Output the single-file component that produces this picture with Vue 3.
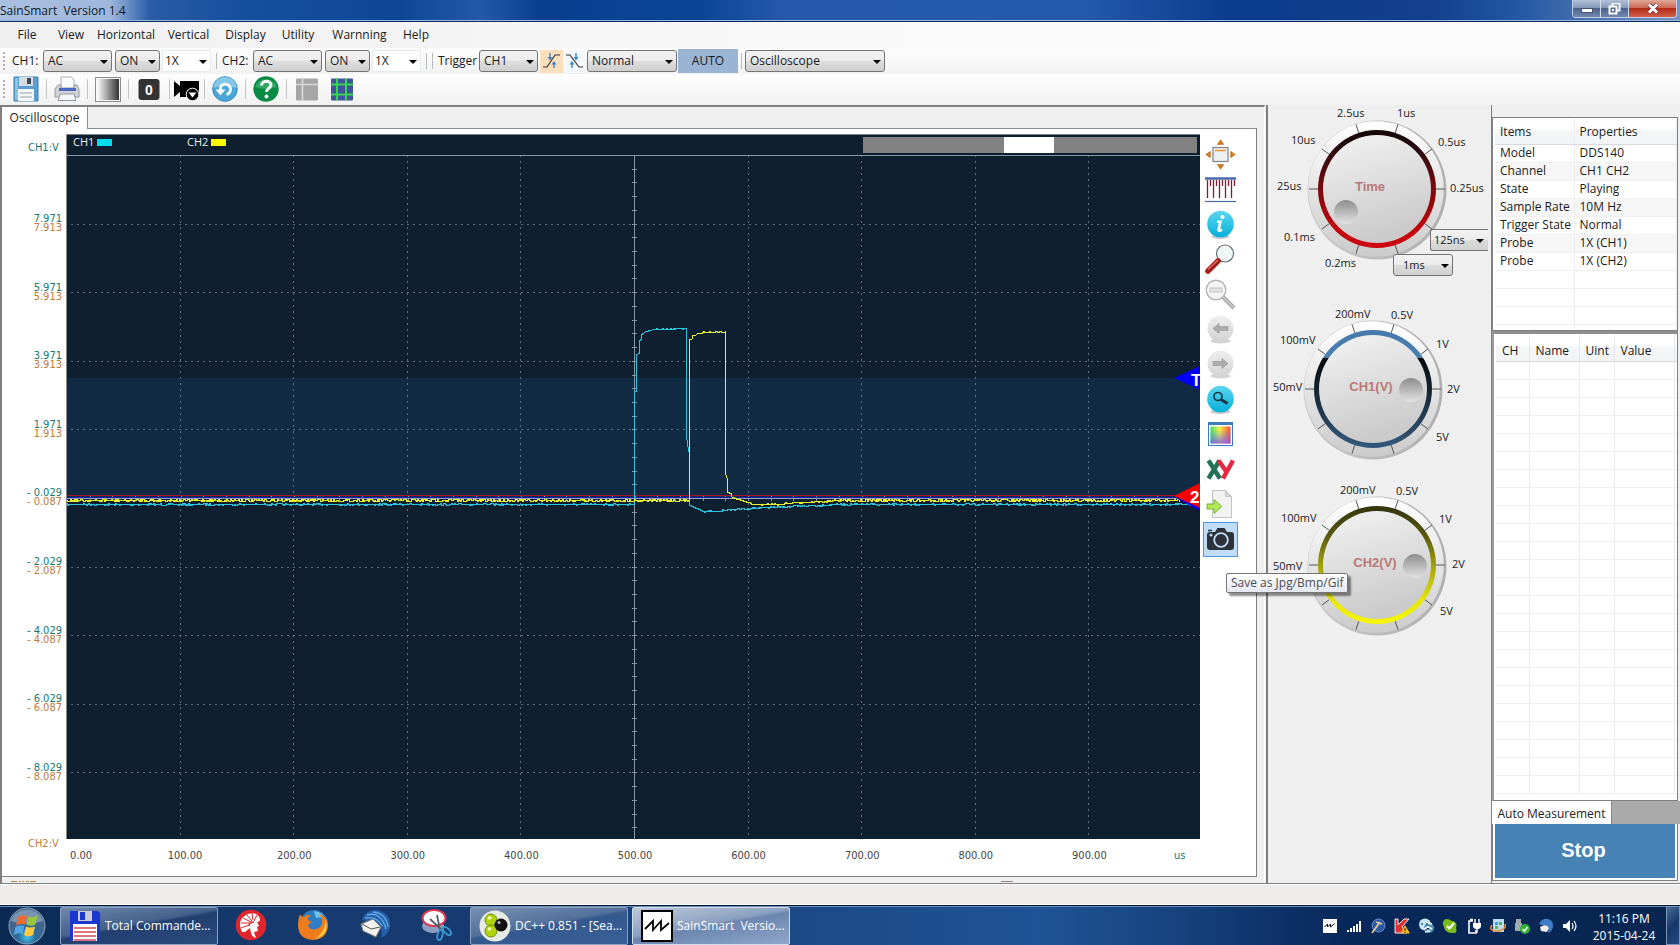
<script setup>
import { ref } from 'vue'

const menus = [
  { name: 'File', w: 40 }, { name: 'View', w: 48 }, { name: 'Horizontal', w: 62 },
  { name: 'Vertical', w: 63 }, { name: 'Display', w: 51 }, { name: 'Utility', w: 54 },
  { name: 'Warnning', w: 69 }, { name: 'Help', w: 44 }
]

const controls = [
  { id: 'ch1', label: 'CH1:', coupling: 'AC', state: 'ON', probe: '1X' },
  { id: 'ch2', label: 'CH2:', coupling: 'AC', state: 'ON', probe: '1X' }
]

const fileTools = [
  { id: 'save', sep: true }, { id: 'print', sep: true }, { id: 'contrast', sep: true },
  { id: 'zero', sep: true }, { id: 'video', sep: true }, { id: 'refresh', sep: true },
  { id: 'help', sep: true }, { id: 'table', sep: false }, { id: 'grid', sep: false }
]

const sideTools = ['move', 'ruler', 'info', 'zoomin', 'zoomout', 'back', 'forward', 'find', 'palette', 'xy', 'export', 'snapshot']

const axis = [
  ['7.971', '7.913'], ['5.971', '5.913'], ['3.971', '3.913'], ['1.971', '1.913'],
  ['- 0.029', '- 0.087'], ['- 2.029', '- 2.087'], ['- 4.029', '- 4.087'],
  ['- 6.029', '- 6.087'], ['- 8.029', '- 8.087']
]
const axisTop = i => ({ top: ((80 + i * 68.6) / 705) * 100 + '%' })

const times = ['0.00', '100.00', '200.00', '300.00', '400.00', '500.00', '600.00', '700.00', '800.00', '900.00']
const timeLeft = i => ({ left: (i === 0 ? 14 : i === 1 ? 118 : i * 113.6) / 11.33 + '%' })

const gridX = [1, 2, 3, 4, 6, 7, 8, 9].map(n => Math.round(n * 113.6) + 0.5 - 1)
const gridY = [1, 2, 3, 4, 6, 7, 8, 9].map(n => Math.round(n * 68.6) + 0.5)
const ticksY = Array.from({ length: 49 }, (_, i) => Math.round((i + 1) * 13.72) + 0.5)
const ticksX = Array.from({ length: 49 }, (_, i) => Math.round((i + 1) * 22.7) + 0.5)

let seed = 7
function rand() {
  seed = (seed * 16807) % 2147483647
  return seed / 2147483647
}
function flat(from, to, yFrom, yTo, amp) {
  const out = []
  for (let x = from; x <= to; x += 1) {
    const t = (x - from) / (to - from)
    const y = yFrom + (yTo - yFrom) * t
    out.push([x, Math.round(y + (rand() - 0.5) * 2 * amp) + 0.5])
  }
  return out
}
function path(points) {
  return 'M' + points.map(p => p.join(' ')).join('L')
}
const cyan = path([
  ...flat(0, 566, 349, 349, 0.7),
  [567.5, 349], [567.5, 236], [569.5, 236], [569.5, 200], [572.5, 198], [572.5, 186], [574.5, 184],
  [574.5, 180], [578, 177], [585, 175],
  ...flat(588, 619, 174, 173, 0.6),
  [619.5, 173.5], [619.5, 281], [621.5, 296], [622.5, 296], [622.5, 349],
  ...flat(623, 635, 350, 355, 0.5), ...flat(636, 655, 356, 356, 0.6),
  ...flat(656, 700, 355, 352, 0.7), ...flat(701, 765, 352, 349.5, 0.7), ...flat(766, 1124, 349, 349, 0.7)
])
const yellow = path([
  ...flat(0, 621, 345, 345, 1.3),
  [622.5, 345], [622.5, 185], [625, 184], [625, 181], [629, 180], [631, 178],
  ...flat(634, 658, 177, 176.5, 0.6),
  [658.5, 177], [658.5, 318], [660.5, 325], [660.5, 337], [664.5, 339], [665, 342],
  ...flat(666, 684, 342, 348, 0.5), ...flat(685, 715, 349, 349, 0.6),
  ...flat(716, 760, 348, 346, 0.8), ...flat(761, 1113, 345, 345, 1.3)
])

const knobs = [
  {
    id: 'time', title: 'Time', cx: 109, h: 200, tx: 102, dot: [-31, 23],
    stops: [['0', '#14060a'], ['0.15', '#240a0e'], ['0.5', '#7c0a10'], ['0.85', '#c4040c'], ['1', '#cc0610']],
    labels: [['2.5us', 69, 12], ['1us', 129, 12], ['10us', 23, 39], ['0.5us', 170, 41], ['25us', 9, 85], ['0.25us', 182, 87], ['0.1ms', 16, 136], ['0.2ms', 57, 162]]
  },
  {
    id: 'volt1', title: 'CH1(V)', cx: 105, h: 176, tx: 103, dot: [38, 1],
    stops: [['0', '#4479aa'], ['0.24', '#4a80b0'], ['0.24', '#060a0e'], ['0.5', '#16232f'], ['1', '#34597c']],
    labels: [['200mV', 67, 13], ['0.5V', 123, 14], ['100mV', 12, 39], ['1V', 168, 43], ['50mV', 5, 86], ['2V', 179, 88], ['5V', 168, 136]]
  },
  {
    id: 'volt2', title: 'CH2(V)', cx: 109, h: 176, tx: 107, dot: [38, 1],
    stops: [['0', '#33330e'], ['0.25', '#58580c'], ['0.5', '#a0a00e'], ['0.8', '#e6e608'], ['1', '#f8f800']],
    labels: [['200mV', 72, 13], ['0.5V', 128, 14], ['100mV', 13, 41], ['1V', 171, 42], ['50mV', 5, 89], ['2V', 184, 87], ['5V', 172, 134]]
  }
]
const spokes = Array.from({ length: 10 }, (_, i) => {
  const a = (i * 36 * Math.PI) / 180
  return [Math.cos(a) * 59, Math.sin(a) * 59, Math.cos(a) * 68, Math.sin(a) * 68]
})

const props = [
  ['Model', 'DDS140'], ['Channel', 'CH1 CH2'], ['State', 'Playing'], ['Sample Rate', '10M Hz'],
  ['Trigger State', 'Normal'], ['Probe', '1X (CH1)'], ['Probe', '1X (CH2)'], ['', ''], ['', ''], ['', ''], ['', '']
]

const pinned = ['helmet', 'firefox', 'mail', 'scissors']
const tray = ['wave', 'signal', 'tool', 'antivirus', 'globe', 'ok', 'power', 'sync', 'usb', 'bird', 'sound']
const rising = ref(true)
</script>

<template>
  <div class="window">
    <header class="titlebar">
      <h1>SainSmart&nbsp; Version 1.4</h1>
      <div class="winbtns">
        <button class="wb min" aria-label="Minimize"><svg width="12" height="10" viewBox="0 0 12 10"><rect x="0.5" y="4.500" width="11" height="4" fill="#fff" stroke="#46536b" /></svg></button>
        <button class="wb max" aria-label="Restore">
          <svg width="13" height="12" viewBox="0 0 13 12"><path d="M4.500 .5h7v7h-7z" fill="#566b93" stroke="#fff" stroke-width="2" /><path d="M1.500 3.500h7v7h-7z" fill="#566b93" stroke="#fff" stroke-width="2" /><path d="M4 6h2v2h-2z" fill="#fff" /></svg>
        </button>
        <button class="wb close" aria-label="Close"><svg width="12" height="11" viewBox="0 0 12 11"><path d="M2 1.500l8 8M10 1.500l-8 8" stroke="#5d2a28" stroke-width="4.400" /><path d="M2 1.500l8 8M10 1.500l-8 8" stroke="#fff" stroke-width="3" /></svg></button>
      </div>
    </header>

    <nav class="menubar">
      <button v-for="m in menus" :key="m.name" :style="{ width: m.w + 'px' }">{{ m.name }}</button>
    </nav>

    <div class="toolbar first">
      <i class="grip"></i>
      <template v-for="c in controls" :key="c.id">
        <label class="lbl" :for="c.id">{{ c.label }}</label>
        <span class="combo w69"><select :id="c.id"><option>{{ c.coupling }}</option><option>DC</option></select></span>
        <span class="combo w45"><select :aria-label="c.id + ' state'"><option>{{ c.state }}</option><option>OFF</option></select></span>
        <span class="combo w49 plain"><select :aria-label="c.id + ' probe'"><option>{{ c.probe }}</option><option>10X</option></select></span>
        <i class="vsep"></i>
      </template>
      <i class="vsep"></i>
      <label class="lbl trig" for="trigger">Trigger</label>
      <span class="combo w59"><select id="trigger"><option>CH1</option><option>CH2</option></select></span>
      <button class="edge" :class="{ on: rising }" aria-label="Rising edge" @click="rising = true">
        <svg width="17" height="16" viewBox="0 0 17 16"><path d="M0 14h4L12 2h5" fill="none" stroke="#3a3535" stroke-width="1.200" /><path d="M7 0v5M11 15v-5" stroke="#3f86c8" stroke-width="1.400" /><path d="M4.500 4h5L7 7.500zM8.500 11.500h5L11 8z" fill="#3f86c8" /></svg>
      </button>
      <button class="edge narrow" :class="{ on: !rising }" aria-label="Falling edge" @click="rising = false">
        <svg width="17" height="16" viewBox="0 0 17 16"><path d="M0 2h4L13 14h4" fill="none" stroke="#3a3535" stroke-width="1.200" /><path d="M10 0v5M6 15v-5" stroke="#3f86c8" stroke-width="1.400" /><path d="M7.500 4h5L10 7.500zM3.500 11.500h5L6 8z" fill="#3f86c8" /></svg>
      </button>
      <span class="combo w90"><select aria-label="Trigger mode"><option>Normal</option><option>Single</option></select></span>
      <button class="auto">AUTO</button>
      <i class="vsep"></i>
      <span class="combo w140"><select aria-label="Instrument"><option>Oscilloscope</option></select></span>
    </div>

    <div class="toolbar second">
      <i class="grip"></i>
      <template v-for="t in fileTools" :key="t.id">
        <button class="tool" :class="t.id" :aria-label="t.id">
          <svg v-if="t.id === 'save'" width="26" height="26" viewBox="0 0 26 26">
            <path d="M1 1h24v24H1z" fill="#5a9fd0" stroke="#3f80b4" /><path d="M2 2h3v22H2z" fill="#8cc2e6" /><rect x="6" y="1" width="14" height="9" fill="#d5dde3" /><rect x="14" y="2" width="4" height="6" fill="#3d4a56" /><rect x="5" y="13" width="16" height="12" fill="#f4f7f9" /><path d="M7 17h12M7 21h12" stroke="#b3bfc8" stroke-width="1.500" />
          </svg>
          <svg v-else-if="t.id === 'print'" width="26" height="26" viewBox="0 0 26 26">
            <path d="M7 1h10l3 3v9H7z" fill="#fafafa" stroke="#a9adb3" /><path d="M4 9h3v3h13V9h3l2 4v8H1v-8z" fill="#cfd2d7" stroke="#969ba3" /><path d="M5 13.500h17" stroke="#4c69c0" stroke-width="3" /><path d="M6 18h14l2 6.500H4z" fill="#f4f4f4" stroke="#969ba2" />
          </svg>
          <svg v-else-if="t.id === 'contrast'" width="26" height="26" viewBox="0 0 26 26">
            <defs><linearGradient id="grey"><stop offset="0" stop-color="#fff" /><stop offset="1" stop-color="#333" /></linearGradient></defs>
            <rect x="0.5" y="1.500" width="25" height="24" fill="#f6f6f6" stroke="#8c8c8c" /><rect x="2" y="3" width="22" height="21" fill="url(#grey)" />
          </svg>
          <svg v-else-if="t.id === 'zero'" width="26" height="26" viewBox="0 0 26 26">
            <rect x="2.500" y="3" width="21" height="21" rx="3" fill="#333" /><text x="13" y="18.500" text-anchor="middle" class="zero-t">0</text>
          </svg>
          <svg v-else-if="t.id === 'video'" width="26" height="26" viewBox="0 0 26 26">
            <path d="M0 5l6 5V5h19v16H6v-5l-6 5z" fill="#000" /><circle cx="18.500" cy="18.500" r="6.300" fill="#000" stroke="#fff" /><path d="M14.500 16.500h8l-4 5z" fill="#fff" />
          </svg>
          <svg v-else-if="t.id === 'refresh'" width="26" height="26" viewBox="0 0 26 26">
            <circle cx="13" cy="13" r="12.300" fill="#4aa6d8" stroke="#348cc0" /><path d="M1.500 12a11.500 11 0 0 1 23 0q-12-4-23 0z" fill="#85c8ea" /><path d="M8.500 15.500V11a5.300 5.300 0 1 1 6 7.500" fill="none" stroke="#fff" stroke-width="2.800" /><path d="M3.500 13.500h10l-5 6z" fill="#fff" />
          </svg>
          <svg v-else-if="t.id === 'help'" width="26" height="26" viewBox="0 0 26 26">
            <circle cx="13" cy="13" r="12.700" fill="#078a42" /><path d="M2 11a11.500 11 0 0 1 22 0q-11 4-22 0z" fill="#31a563" /><path d="M8.500 9.500c0-5.500 9.500-5.500 9.500-.5 0 3.500-4.500 3-4.500 7" fill="none" stroke="#fff" stroke-width="3" /><circle cx="13.500" cy="20.500" r="2" fill="#fff" />
          </svg>
          <svg v-else-if="t.id === 'table'" width="26" height="26" viewBox="0 0 26 26">
            <rect x="2" y="2.500" width="22" height="22" rx="1" fill="#a6a6a6" /><path d="M2 8.500h22M8.500 2.500v22" stroke="#d9d9d9" stroke-width="1.600" />
          </svg>
          <svg v-else width="26" height="26" viewBox="0 0 26 26">
            <rect x="2" y="2.500" width="22" height="22" rx="1" fill="#42529e" /><path d="M8 2.500v22M17 2.500v22M2 8.500h22M2 18.500h22" stroke="#35d64f" stroke-width="2" />
          </svg>
        </button>
        <i v-if="t.sep" class="vsep wide"></i>
      </template>
    </div>

    <main class="body">
      <section class="scope-col">
        <div class="tabs"><button class="tab">Oscilloscope</button></div>
        <div class="panel">
          <div class="yaxis">
            <span class="unit c1">CH1:V</span>
            <template v-for="(a, i) in axis" :key="i">
              <span class="pair" :style="axisTop(i)"><b>{{ a[0] }}</b><em>{{ a[1] }}</em></span>
            </template>
            <span class="unit c2">CH2:V</span>
          </div>
          <div class="scope">
            <div class="legend">
              <span class="lg">CH1 <i class="sw cy"></i></span>
              <span class="lg">CH2 <i class="sw ye"></i></span>
              <span class="overview"><i></i></span>
            </div>
            <svg class="plot" viewBox="0 0 1133 684" preserveAspectRatio="none">
              <rect width="1133" height="684" fill="#0e2030" />
              <rect y="223" width="1133" height="120" fill="#122b45" />
              <g stroke="#8796a0" stroke-width="1" shape-rendering="crispEdges">
                <path v-for="x in gridX" :key="'x' + x" :d="`M${x} 0V684`" stroke-dasharray="2 4" opacity=".65" />
                <path v-for="y in gridY" :key="'y' + y" :d="`M4 ${y}H1133`" stroke-dasharray="2 4" opacity=".65" />
                <path d="M567.5 0V684M0 .5H1133" />
                <path v-for="y in ticksY" :key="'t' + y" :d="`M565 ${y}H570`" />
                <path v-for="x in ticksX" :key="'u' + x" :d="`M${x} 341V346`" />
              </g>
              <g fill="none" stroke-width="1" shape-rendering="crispEdges">
                <path d="M0 340.500H1133" stroke="#a8122a" />
                <path d="M0 342.500H1133" stroke="#1c1cb4" />
                <path d="M0 343.500H1133" stroke="#98a4b8" />
                <path :d="cyan" stroke="#2cc4dc" />
                <path :d="yellow" stroke="#e8f030" />
              </g>
              <path d="M1107 223L1133 211V235z" fill="#0000f8" />
              <text x="1124" y="231" class="mark">T</text>
              <path d="M1109 343L1133 330V356z" fill="#0000f8" />
              <path d="M1107 341L1133 328V353z" fill="#f80000" />
              <text x="1123" y="348" class="mark">2</text>
            </svg>
          </div>
          <div class="side">
            <button v-for="s in sideTools" :key="s" :class="{ sel: s === 'snapshot' }" :aria-label="s">
              <svg width="31" height="31" viewBox="0 0 31 31">
                <defs>
                  <linearGradient id="aqua" x2="0" y2="1"><stop offset="0" stop-color="#5cd6f0" /><stop offset="1" stop-color="#06b0da" /></linearGradient>
                  <linearGradient id="pale" x2="0" y2="1"><stop offset="0" stop-color="#efefef" /><stop offset="1" stop-color="#d2d2d2" /></linearGradient>
                  <linearGradient id="hue"><stop offset="0" stop-color="#35e060" /><stop offset=".45" stop-color="#f6f04a" /><stop offset="1" stop-color="#ff4a3a" /></linearGradient>
                  <linearGradient id="cool" x2="0" y2="1"><stop offset=".2" stop-color="#3a7cff" stop-opacity="0" /><stop offset="1" stop-color="#8a4cff" stop-opacity=".8" /></linearGradient>
                </defs>
                <g v-if="s === 'move'">
                  <rect x="8" y="8.500" width="15" height="14" fill="#eef1f4" stroke="#85888c" stroke-width="1.300" /><path d="M10 11.500h11" stroke="#f09030" stroke-width="1.500" />
                  <path d="M15.500 1.500l2.500 3.500h-5zM15.500 29.500l2.500-3.500h-5zM1.500 15.500l3.500-2.500v5zM29.500 15.500l-3.500-2.500v5z" fill="#f2a23a" stroke="#c46a14" stroke-width="1.300" />
                </g>
                <g v-else-if="s === 'ruler'">
                  <path d="M0 4.500h31" stroke="#4a68ac" stroke-width="2.500" /><path d="M0 27.500h31" stroke="#4a68ac" stroke-width="1.200" />
                  <path d="M2.500 6v18M8.500 6v18M14.500 6v18M20.500 6v18M26.500 6v18M5.500 6v6M11.500 6v6M17.500 6v6M23.500 6v6M29.500 6v6" stroke="#7c1c34" stroke-width="1.300" />
                </g>
                <g v-else-if="s === 'info'">
                  <ellipse cx="15.500" cy="27.500" rx="9" ry="2.500" fill="#c6cacc" /><circle cx="15.500" cy="15" r="13.300" fill="url(#aqua)" /><circle cx="17.500" cy="8" r="2.100" fill="#fff" /><path d="M12 12.800h3.500l-2 8.200q0 1.500 3.500-.5" fill="none" stroke="#fff" stroke-width="2.600" />
                </g>
                <g v-else-if="s === 'zoomin'">
                  <circle cx="20" cy="9.500" r="8.500" fill="#eef6f6" stroke="#68717a" stroke-width="1.200" /><path d="M13 17L3 27" stroke="#a01c18" stroke-width="5.500" stroke-linecap="round" /><path d="M13 16L3 25.500" stroke="#e4665c" stroke-width="1.600" />
                </g>
                <g v-else-if="s === 'zoomout'">
                  <circle cx="11" cy="11" r="9.800" fill="#f5f5f5" stroke="#b4b4b4" stroke-width="1.400" /><rect x="5" y="9" width="12" height="4" fill="#e2e2e2" stroke="#c8c8c8" /><path d="M18 18l11 11" stroke="#a4a4a4" stroke-width="4" /><path d="M18 18l11 11" stroke="#d0d0d0" stroke-width="1.400" />
                </g>
                <g v-else-if="s === 'back' || s === 'forward'">
                  <ellipse cx="15.500" cy="27" rx="10" ry="2.500" fill="#d3d3d3" /><circle cx="15.500" cy="14.500" r="13" fill="url(#pale)" />
                  <path v-if="s === 'back'" d="M8 14.500l6-5v3h9v4h-9v3z" fill="#acacac" stroke="#949494" stroke-width=".6" />
                  <path v-else d="M23 14.500l-6-5v3H8v4h9v3z" fill="#acacac" stroke="#949494" stroke-width=".6" />
                </g>
                <g v-else-if="s === 'find'">
                  <ellipse cx="15.500" cy="27.500" rx="10" ry="2.500" fill="#c6cacc" /><circle cx="15.500" cy="15" r="13.300" fill="url(#aqua)" /><circle cx="13" cy="12.500" r="4" fill="none" stroke="#1b3644" stroke-width="1.700" /><path d="M16 15.500l6.500 4" stroke="#1b3644" stroke-width="3" />
                </g>
                <g v-else-if="s === 'palette'">
                  <rect x="3.500" y="3.500" width="24" height="23" fill="#fff" stroke="#3b7cb8" /><rect x="3.500" y="3.500" width="24" height="2.500" fill="#3b7cb8" /><rect x="5.500" y="7.500" width="20" height="17" fill="url(#hue)" /><rect x="5.500" y="7.500" width="20" height="17" fill="url(#cool)" />
                </g>
                <g v-else-if="s === 'xy'">
                  <path d="M3.500 6.500l11.500 18M14.500 6.500L3.500 24.500" stroke="#257058" stroke-width="4.500" /><path d="M13.500 6.500l7.500 10.500M28 6.500L18 24.500" stroke="#e62840" stroke-width="4.500" />
                </g>
                <g v-else-if="s === 'export'">
                  <path d="M7.500 1.500h13l6 6v21h-19z" fill="#f2f2f2" stroke="#c4c4c4" /><path d="M20.500 1.500v6h6z" fill="#d6d6d6" stroke="#b8b8b8" stroke-width=".6" /><path d="M2 15h7v-4.500l7.500 7-7.500 7V20H2z" fill="#b4e85a" stroke="#70b430" />
                </g>
                <g v-else>
                  <path d="M5 8h5l2.500-4h7l2.500 4h4q3 0 3 3v12q0 3-3 3H5q-3 0-3-3V11q0-3 3-3z" fill="#2d3238" /><circle cx="16" cy="16" r="6.800" fill="#2d3238" stroke="#c0defa" stroke-width="1.800" /><circle cx="6" cy="11" r="1.500" fill="#c0defa" /><path d="M3 6.500h4" stroke="#2d3238" stroke-width="1.500" />
                </g>
              </svg>
            </button>
            <div class="tip" role="tooltip">Save as Jpg/Bmp/Gif</div>
          </div>
          <div class="xaxis">
            <span v-for="(t, i) in times" :key="t" :style="timeLeft(i)">{{ t }}</span>
            <span class="us">us</span>
          </div>
        </div>
        <div class="cut"><svg width="28" height="3" viewBox="0 0 28 3"><path d="M1 1.500h6M9 1.500h2M12 1.500h2M16 1.500h3M20 1.500h6" stroke="#b88848" /></svg><svg width="14" height="3" viewBox="0 0 14 3"><path d="M1 1.500h12" stroke="#888" /></svg></div>
      </section>

      <aside class="knobs">
        <div v-for="k in knobs" :key="k.id" class="knob" :style="{ height: k.h + 'px' }">
          <svg width="220" height="176" viewBox="0 0 220 176">
            <defs>
              <linearGradient :id="k.id + 'ring'" x2="0" y2="1"><stop v-for="(s, i) in k.stops" :key="i" :offset="s[0]" :stop-color="s[1]" /></linearGradient>
              <linearGradient :id="k.id + 'rim'" x2="0" y2="1"><stop offset="0" stop-color="#fff" /><stop offset="1" stop-color="#cbcbcb" /></linearGradient>
              <linearGradient :id="k.id + 'face'" x2="0.300" y2="1"><stop offset="0" stop-color="#f3f3f3" /><stop offset="1" stop-color="#cbcbcb" /></linearGradient>
              <linearGradient :id="k.id + 'dot'" x2="0" y2="1"><stop offset="0" stop-color="#8e8e8e" /><stop offset="1" stop-color="#e2e2e2" /></linearGradient>
              <linearGradient :id="k.id + 'edge'"><stop offset="0" stop-color="#c9c9c9" /><stop offset="1" stop-color="#b0b0b0" /></linearGradient>
            </defs>
            <g :transform="`translate(${k.cx} 84)`">
              <circle cy="1" r="69.500" :fill="`url(#${k.id}edge)`" /><circle cx="-1" r="67.800" :fill="`url(#${k.id}rim)`" />
              <path v-for="(s, i) in spokes" :key="i" :d="`M${s[0]} ${s[1]}L${s[2]} ${s[3]}`" stroke="#555" />
              <circle r="59" :fill="`url(#${k.id}ring)`" /><circle r="54" :fill="`url(#${k.id}face)`" />
              <circle :cx="k.dot[0]" :cy="k.dot[1]" r="12" :fill="`url(#${k.id}dot)`" />
            </g>
            <text class="kt" :x="k.tx" y="86" text-anchor="middle">{{ k.title }}</text>
            <text v-for="l in k.labels" :key="l[0]" class="kl" :x="l[1]" :y="l[2]">{{ l[0] }}</text>
          </svg>
          <template v-if="k.id === 'time'">
            <span class="combo ns"><select aria-label="Fine time base"><option>125ns</option></select></span>
            <span class="combo ms"><select aria-label="Coarse time base"><option>1ms</option></select></span>
          </template>
        </div>
      </aside>

      <aside class="info">
        <div class="box props">
          <table>
            <colgroup><col class="c80" /><col /></colgroup>
            <thead><tr><th>Items</th><th>Properties</th></tr></thead>
            <tbody><tr v-for="(p, i) in props" :key="i"><td>{{ p[0] }}</td><td>{{ p[1] }}</td></tr></tbody>
          </table>
        </div>
        <div class="box measure">
          <table>
            <colgroup><col class="c34" /><col class="c50" /><col class="c35" /><col /><col class="c10" /></colgroup>
            <thead><tr><th>CH</th><th>Name</th><th>Uint</th><th>Value</th><th></th></tr></thead>
            <tbody><tr v-for="n in 24" :key="n"><td></td><td></td><td></td><td></td><td></td></tr></tbody>
          </table>
        </div>
        <div class="mtabs"><button>Auto Measurement</button></div>
        <div class="stopbox"><button class="stop">Stop</button></div>
      </aside>
    </main>

    <div class="status"></div>

    <footer class="taskbar">
      <button class="start" aria-label="Start">
        <svg width="40" height="38" viewBox="0 0 40 38">
          <defs><radialGradient id="orb" cy=".8"><stop offset="0" stop-color="#49c4e8" /><stop offset=".5" stop-color="#2a6c9c" /><stop offset="1" stop-color="#45668c" /></radialGradient></defs>
          <circle cx="20" cy="19" r="18" fill="url(#orb)" stroke="#8ba6bd" /><path d="M4 14a16.500 15 0 0 1 32 0q-16 6-32 0z" fill="#b9cddd" opacity=".45" />
          <path d="M11 10q4.500-3 9-1l-2 8.500q-4.500-2-9 1z" fill="#ee6a30" /><path d="M21.500 9.500q4 2 9-1l-2 9q-4.500 2.500-9 0z" fill="#98c63c" /><path d="M8.500 20q4.500-3 9-1l-2 8q-4.500-2-9 1z" fill="#4fa4e4" /><path d="M19 19.500q4.500 2 9 0l-2 8.500q-4.500 2.500-9 0z" fill="#fcc940" />
        </svg>
      </button>
      <button class="task t1">
        <svg width="32" height="32" viewBox="0 0 32 32"><path d="M1 1h28l2 2v28H1z" fill="#1c36d0" /><rect x="9" y="1" width="14" height="10" fill="#c9cbd6" /><rect x="11" y="2" width="5" height="8" fill="#1c36d0" /><rect x="4" y="14" width="24" height="17" fill="#fff" /><path d="M5 18h22M5 22h22M5 26h22M5 30h22" stroke="#d04858" stroke-width="1.400" /></svg>
        <span>Total Commande...</span>
      </button>
      <button v-for="p in pinned" :key="p" class="pin" :aria-label="p">
        <svg width="32" height="32" viewBox="0 0 32 32">
          <g v-if="p === 'helmet'"><circle cx="16" cy="16" r="15.300" fill="#e0262c" /><path d="M7 23Q1 10 13 5q9-3 12 5 0 3-3 3l2 4-2 1 1 4-4 1 2 6q-4-1-5-5l-1-5-5 4z" fill="#fff" /><path d="M6 19l8-3M6 14l9 0M8 9l8 4M12 6l5 6M17 4l1 7M22 6l-3 6" stroke="#e0262c" stroke-width="1" /><path d="M14 17q0-4 5-4" fill="none" stroke="#e0262c" stroke-width="1.500" /></g>
          <g v-else-if="p === 'firefox'"><circle cx="17" cy="15" r="14" fill="#2e7cc4" /><path d="M17 2q10 1 12 11-4-6-10-4z" fill="#6cc6ec" /><path d="M3 5q1 3 4 3 3-3 7-2-4 3-3 5l4 2-4 3q2 6 8 4 7-2 6-9 0-3-4-6 8 1 10 10 0 15-15 16Q1 30 1 16q0-6 2-11z" fill="#ef7c1c" /><path d="M28 9q6 17-10 21 12-8 10-21z" fill="#fcd040" /></g>
          <g v-else-if="p === 'mail'"><path d="M3 11Q6 1 17 1q14 2 14 15-1 10-9 13 2-6-1-11-6-5-14-6z" fill="#2460ac" /><path d="M8 6q14-4 19 14M14 3q13 1 15 15M6 9q12-2 17 8" fill="none" stroke="#62a8e4" stroke-width="1.400" /><path d="M2 15l12-5 8 8-5 10-13-6z" fill="#f1f1ee" stroke="#777" /><path d="M3 15l9 5 9-2" fill="none" stroke="#555" /></g>
          <g v-else><ellipse cx="12" cy="17" rx="11" ry="7" fill="#8d9fc0" /><ellipse cx="13" cy="9" rx="11.500" ry="8" fill="#fff" stroke="#dc3850" stroke-width="2" /><path d="M9 10l13 12M16 6l3 15" stroke="#555e6c" stroke-width="1.800" /><ellipse cx="19" cy="26" rx="2.500" ry="5" fill="none" stroke="#3a9cd4" stroke-width="1.800" transform="rotate(15 19 26)" /><ellipse cx="26" cy="22" rx="2.500" ry="5" fill="none" stroke="#3a9cd4" stroke-width="1.800" transform="rotate(-45 26 22)" /></g>
        </svg>
      </button>
      <button class="task t2">
        <svg width="32" height="32" viewBox="0 0 32 32"><circle cx="16" cy="16" r="15.500" fill="#e6e9e4" /><circle cx="12" cy="10" r="6" fill="#b2d40c" stroke="#6e8a08" /><circle cx="12" cy="21" r="6" fill="#b2d40c" stroke="#6e8a08" /><circle cx="22" cy="15" r="6.500" fill="#111" /><circle cx="10.500" cy="8" r="1.800" fill="#f4ffb0" /><circle cx="10.500" cy="19" r="1.800" fill="#f4ffb0" /><circle cx="20" cy="12.500" r="1.500" fill="#bbb" /></svg>
        <span>DC++ 0.851 - [Sea...</span>
      </button>
      <button class="task t3">
        <svg width="32" height="32" viewBox="0 0 32 32"><rect x="1" y="1" width="30" height="30" fill="#fff" stroke="#000" stroke-width="2" /><path d="M4 19l8-8v9l8-9v9l8-7" fill="none" stroke="#000" stroke-width="1.800" /></svg>
        <span>SainSmart&nbsp; Versio...</span>
      </button>
      <div class="tray">
        <button v-for="t in tray" :key="t" :aria-label="t">
          <svg width="16" height="16" viewBox="0 0 16 16">
            <g v-if="t === 'wave'"><rect x="1" y="1" width="14" height="14" fill="#fff" /><path d="M2.500 9l3-3v3l3-3v3l4-3.500" fill="none" stroke="#000" /></g>
            <path v-else-if="t === 'signal'" d="M2 14v-2M5 14v-4M8 14V8M11 14V6M14 14V3" stroke="#fff" stroke-width="2" />
            <g v-else-if="t === 'tool'"><circle cx="8.500" cy="7.500" r="6.500" fill="#2c58ac" stroke="#6a8cc8" /><path d="M2 15L10 4M6 4l6 2" stroke="#dcc890" stroke-width="1.800" /></g>
            <g v-else-if="t === 'antivirus'"><path d="M1 1h3v6l6-6h5L8 9l5 6H1z" fill="#e03030" stroke="#fff" stroke-width=".9" /><path d="M11 7l5 8.500H6z" fill="#fcb41c" /><path d="M11 10v3M11 14v1" stroke="#222" /></g>
            <g v-else-if="t === 'globe'"><circle cx="7" cy="6.500" r="6" fill="#c8e6f0" /><circle cx="11" cy="10" r="5" fill="#5494bc" /><path d="M3 6h2M8 6h2" stroke="#2a7090" stroke-width="1.600" /><path d="M6 11l4-2 4 2M7 14l5-1M10 5l4 1" stroke="#fff" stroke-width="1.600" /></g>
            <g v-else-if="t === 'ok'"><path d="M4 1q4 0 6 2 6 1 4 7 2 5-3 5-8 0-9-6-3-6 2-8z" fill="#7cbc18" /><path d="M5 8l2.500 2.500L12 5" fill="none" stroke="#fff" stroke-width="2" /></g>
            <g v-else-if="t === 'power'"><path d="M7 3H3v12h7v-3M4 1.500h3" fill="none" stroke="#fff" stroke-width="1.600" /><path d="M7 5h8v4l-2 2h-4L7 9z" fill="#fff" /><path d="M9 1v4M13 1v4M11 11v4" stroke="#fff" stroke-width="1.400" /></g>
            <g v-else-if="t === 'sync'"><rect x="3" y="1" width="11" height="13" fill="#bcdcf2" /><path d="M5 4h3v3H5z" fill="#3b9be0" /><path d="M9 4h3v3H9zM5 8h3v3H5z" fill="#58b05c" /><path d="M2 7q-4 6 6 6 9-2 7-7" fill="none" stroke="#f08c24" stroke-width="1.600" /></g>
            <g v-else-if="t === 'usb'"><path d="M2 1h5v4H2zM1 5h7v8H1z" fill="#a1a8ae" /><circle cx="11" cy="11" r="5" fill="#30b438" /><path d="M8.500 11l2 2 3-4" fill="none" stroke="#fff" stroke-width="1.500" /></g>
            <g v-else-if="t === 'bird'"><path d="M1 6Q4 0 10 1q6 2 5 8-1 4-5 6 2-6-3-7z" fill="#3c7cc8" /><path d="M2 9q6-4 9 1l-2 4-6-1z" fill="#f1eee8" /></g>
            <g v-else><path d="M1 6h3l4-4v12l-4-4H1z" fill="#fff" /><path d="M10 5q2 3 0 6M12 3q4 5 0 10" fill="none" stroke="#fff" stroke-width="1.200" /></g>
          </svg>
        </button>
      </div>
      <div class="clock"><span>11:16 PM</span><span>2015-04-24</span></div>
      <button class="desktop" aria-label="Show desktop"></button>
    </footer>
  </div>
</template>

<style>
body { margin: 0; background: #f0f0f0; }
</style>

<style scoped>
* { box-sizing: border-box; }
.window { display: flex; flex-direction: column; height: 100vh; overflow: hidden; font: 12px/16px "Open Sans", "Noto Sans", sans-serif; color: #1a1a1a; background: #f0f0f0; }
button, select { font: inherit; color: inherit; margin: 0; padding: 0; border: 0; background: none; }
svg { display: block; flex: none; }
i { flex: none; }

.titlebar { display: flex; justify-content: space-between; height: 22px; flex: none; border-bottom: 1px solid #0c2c66; box-shadow: inset 0 -1px #9ab4dc; background: linear-gradient(90deg, #a9bfe0 0, #9fb7dc 110px, #2a5ca8 150px, #164f9c 240px, #0f4796 400px, #2458a8 480px, #0a3f8f 540px, #0b4496 700px, #2558aa 780px, #2459ac 1080px, #0c3c8c 1230px, #123f8e 1430px, #2458a4 1520px, #7895c4 100%); }
.titlebar h1 { margin: 0; font-size: 12px; line-height: 21px; font-weight: 400; color: #101820; }
.winbtns { display: flex; height: 18px; margin-right: 3px; border: 1px solid #c3d0e4; border-top: 0; border-radius: 0 0 4px 4px; overflow: hidden; }
.wb { display: flex; align-items: center; justify-content: center; width: 28px; background: linear-gradient(#b2c1d8, #8698b8 45%, #4c648e 50%, #7287ac); border-right: 1px solid #d2dcea; }
.wb.close { width: 47px; border-right: 0; background: linear-gradient(#e0a898, #cc6a58 45%, #b42c18 50%, #d0604c); }

.menubar { display: flex; align-items: center; height: 26px; flex: none; padding-left: 7px; background: linear-gradient(90deg, #f0f0f0, #fcfcfc 70%); }
.menubar button { height: 24px; text-align: center; white-space: nowrap; }

.toolbar { display: flex; align-items: center; flex: none; padding-left: 3px; }
.toolbar.first { height: 26px; background: linear-gradient(#fdfdfd, #f2f2f2); }
.toolbar.second { height: 31px; padding-bottom: 1px; background: linear-gradient(#fefefe, #f1f1f1); }
.grip { width: 2px; height: 18px; margin-right: 7px; background: repeating-linear-gradient(#b4b0ac 0 2px, transparent 2px 4px); }
.second .grip { margin-right: 8px; }
.lbl { width: 31px; white-space: nowrap; }
.lbl.trig { width: 41px; }
.combo { position: relative; display: block; height: 22px; flex: none; margin-right: 3px; }
.combo select { display: block; width: 100%; height: 100%; padding: 0 0 1px 4px; appearance: none; border: 1px solid #747474; border-radius: 3px; background: linear-gradient(#f2f2f2, #ebebeb 50%, #dddddd 51%, #cfcfcf); }
.combo.plain select { border: 1px solid #e6ebee; border-radius: 0; background: #fff; padding-left: 2px; }
.combo::after { content: ""; position: absolute; right: 4px; top: 10px; border: 4px solid transparent; border-top-color: #000; border-bottom: 0; pointer-events: none; }
.w69 { width: 69px; } .w45 { width: 45px; margin-right: 2px; } .w49 { width: 49px; margin-right: 5px; } .w59 { width: 59px; margin-right: 2px; } .w90 { width: 90px; margin-right: 1px; } .w140 { width: 140px; }
.vsep { width: 1px; height: 16px; margin-right: 5px; background: #b9b9b9; }
.vsep.wide { height: 20px; margin: 0 7px; background: #c4c4c4; }
.edge { display: flex; align-items: center; justify-content: center; width: 23px; height: 23px; margin-right: 2px; }
.edge.narrow { width: 19px; margin-right: 3px; background: #f2f8fd; }
.edge.on { background: #fbdfbd; }
.auto { width: 60px; height: 24px; margin-right: 3px; background: #9ab4d4; }
.auto + .vsep { margin-right: 3px; }
.tool { width: 26px; height: 28px; flex: none; display: flex; align-items: center; }
.tool.video { margin: 0 -3px; }
.tool.table { margin-right: 9px; }
.zero-t { font: bold 14px "Liberation Sans", sans-serif; fill: #fff; }

.body { display: flex; flex: 1; min-height: 0; }
.scope-col { display: flex; flex-direction: column; flex: 1; min-width: 0; margin-right: 1px; padding: 0 7px 0 0; border-top: 2px solid #808080; border-left: 2px solid #808080; border-right: 1px solid #fff; background: #f0f0f0; }
.tabs { height: 22px; flex: none; border-bottom: 1px solid #888c94; margin: 0; }
.tab { height: 22px; width: 86px; background: #fff; border-right: 1px solid #888c94; }
.panel { flex: 1; min-height: 0; display: grid; grid-template-columns: 65px minmax(0, 1fr) 56px; grid-template-rows: minmax(0, 1fr) 37px; padding-top: 5px; background: #fff; border-right: 1px solid #808080; border-bottom: 1px solid #808080; }
.yaxis { position: relative; font: 11px/12px "DejaVu Sans Condensed", "DejaVu Sans", sans-serif; color: #127a74; }
.unit { position: absolute; left: 26px; transform: translateY(-50%); top: 2%; }
.unit.c2 { top: 100%; margin-top: 5px; color: #bd7b3c; }
.pair { position: absolute; right: 5px; text-align: right; white-space: nowrap; }
.pair b, .pair em { display: block; font-weight: 400; font-style: normal; line-height: 9px; }
.pair em { color: #bd7b3c; }
.scope { display: flex; flex-direction: column; min-height: 0; overflow: hidden; box-shadow: -1px 0 #888; }
.legend { display: flex; align-items: flex-start; height: 21px; flex: none; padding: 1px 3px 0 6px; background: #0e2030; border-top: 1px solid #77858a; font-size: 11px; line-height: 12px; color: #e8eef2; }
.lg { width: 114px; display: flex; align-items: center; gap: 3px; }
.sw { width: 15px; height: 7px; } .cy { background: #00dcf0; } .ye { background: #fcfc00; }
.overview { margin-left: auto; width: 334px; height: 16px; background: #828282; display: flex; margin-top: 1px; }
.overview i { width: 50px; margin-left: 141px; background: #fff; }
.plot { width: 100%; flex: 1; min-height: 0; }
.mark { font: bold 17px "Liberation Sans", sans-serif; fill: #fff; }
.side { position: relative; display: flex; flex-direction: column; padding: 3px 0 0 3px; }
.side button { width: 35px; height: 35px; flex: none; display: flex; align-items: center; justify-content: center; }
.side .sel { background: #bfdcf8; border: 1px solid #4c96e4; }
.tip { position: absolute; z-index: 5; left: 26px; top: 439px; height: 20px; padding: 0 4px; white-space: nowrap; line-height: 18px; font-size: 12px; color: #4c4c54; background: linear-gradient(#fff, #e6e8f2); border: 1px solid #767676; border-radius: 2px; box-shadow: 3px 3px 2px rgba(0, 0, 0, .45); }
.xaxis { grid-column: 2; position: relative; font: 11px/14px "DejaVu Sans Condensed", "DejaVu Sans", sans-serif; color: #444; }
.xaxis span { position: absolute; top: 10px; transform: translateX(-50%); }
.xaxis .us { left: 98.2%; color: #127a74; }
.cut { height: 6px; flex: none; display: flex; justify-content: space-between; align-items: flex-end; padding: 0 243px 0 8px; }

.knobs { width: 225px; flex: none; border-left: 2px solid #808080; background: #efefef; }
.knob { position: relative; }
.knob svg { overflow: visible; }
.kt { font: bold 13px "Liberation Sans", sans-serif; fill: #b87878; }
.kl { font-size: 11px; fill: #1a1a1a; }
.combo.ns { position: absolute; left: 162px; top: 124px; width: 58px; margin: 0; }
.combo.ms { position: absolute; left: 125px; top: 149px; width: 60px; margin: 0; }
.combo.ns select { padding-left: 3px; border-right: 0; border-radius: 3px 0 0 3px; font-size: 11px; }
.combo.ms select { padding-left: 9px; font-size: 11px; }

.info { display: flex; flex-direction: column; width: 189px; flex: none; padding: 12px 2px 0 0; border-left: 1px solid #808080; }
.box { background: #fff; overflow: hidden; border: 1px solid #808080; padding-left: 2px; }
.props { height: 214px; flex: none; }
.measure { flex: 1; min-height: 0; border-top: 3px solid #8e8e8e; border-left: 2px solid #9a9a9a; }
table { width: 100%; border-collapse: collapse; table-layout: fixed; }
th { height: 26px; padding: 2px 0 0 5px; text-align: left; font-weight: 400; white-space: nowrap; background: linear-gradient(#fff 45%, #f5f6f8 46%, #f2f3f5); border-right: 1px solid #e4e6ea; border-bottom: 1px solid #d8dade; }
.measure th { height: 27px; padding: 7px 0 0 6px; }
td { height: 18px; padding: 0 0 0 5px; line-height: 16px; white-space: nowrap; border-right: 1px solid #ececec; border-bottom: 1px solid #f0f0f0; }
.props tr:nth-child(even) td { background: #f6f6f6; }
.props tr:nth-child(n + 8) td { background: #fff; }
.props th, .props td { border-right-color: #eee; }
.c80 { width: 79px; } .c34 { width: 33px; } .c50 { width: 50px; } .c35 { width: 35px; } .c10 { width: 3px; }
.measure th:last-child, .measure td:last-child { padding: 0; border-right: 0; }
.mtabs { display: flex; height: 23px; flex: none; background: #aaa; margin-right: -2px; }
.mtabs button { width: 120px; padding-top: 2px; background: #fff; border-right: 1px solid #888; }
.stopbox { display: flex; height: 57px; flex: none; padding: 0 2px 2px 2px; margin-bottom: 2px; border: 1px solid #808080; border-top: 0; background: #fff; }
.stop { flex: 1; background: #4682b4; color: #fff; font: bold 20px "Liberation Sans", sans-serif; padding: 0 3px 2px 0; }

.status { height: 22px; flex: none; border-top: 1px solid #808080; background: #f0eceb; box-shadow: inset 0 1px #fff, inset 0 -1px #fff; }

.taskbar { display: flex; align-items: flex-start; height: 40px; flex: none; border-top: 1px solid #061a38; box-shadow: inset 0 1px #6c8cb4; color: #fff; background: linear-gradient(90deg, #0a2a54, #16396e 15%, #173c72 30%, #1c4a88 48%, #1f5296 62%, #16437e 70%, #08285a 80%, #082650 100%); }
.start { width: 40px; height: 39px; margin: 0 13px 0 7px; }
.task { display: flex; align-items: center; gap: 4px; width: 158px; height: 38px; margin-top: 1px; padding-left: 8px; border: 1px solid #8ba2c0; border-radius: 2px; white-space: nowrap; background: linear-gradient(170deg, #7088ac, #44618c 45%, #223f70 50%, #2c4c7e); }
.task.t2 { margin-left: 2px; margin-right: 4px; background: linear-gradient(170deg, #7890b4, #53709c 45%, #34598e 50%, #3a6098); }
.task.t3 { border-color: #d2dcea; background: linear-gradient(170deg, #bcc9dc, #8ba0c0 45%, #6c86b0 50%, #8fa6c8); }
.pin { width: 62px; height: 38px; display: flex; align-items: center; justify-content: center; }
.t1 + .pin { margin-left: 2px; }
.tray { display: flex; align-items: center; margin-left: auto; height: 40px; }
.tray button { width: 24px; height: 24px; display: flex; align-items: center; justify-content: center; }
.clock { display: flex; flex-direction: column; width: 84px; padding-top: 4px; text-align: center; line-height: 17px; }
.desktop { width: 14px; height: 39px; border: 1px solid #7c95b4; background: linear-gradient(135deg, #4c6c98, #17386a 50%, #234a80); }
</style>
